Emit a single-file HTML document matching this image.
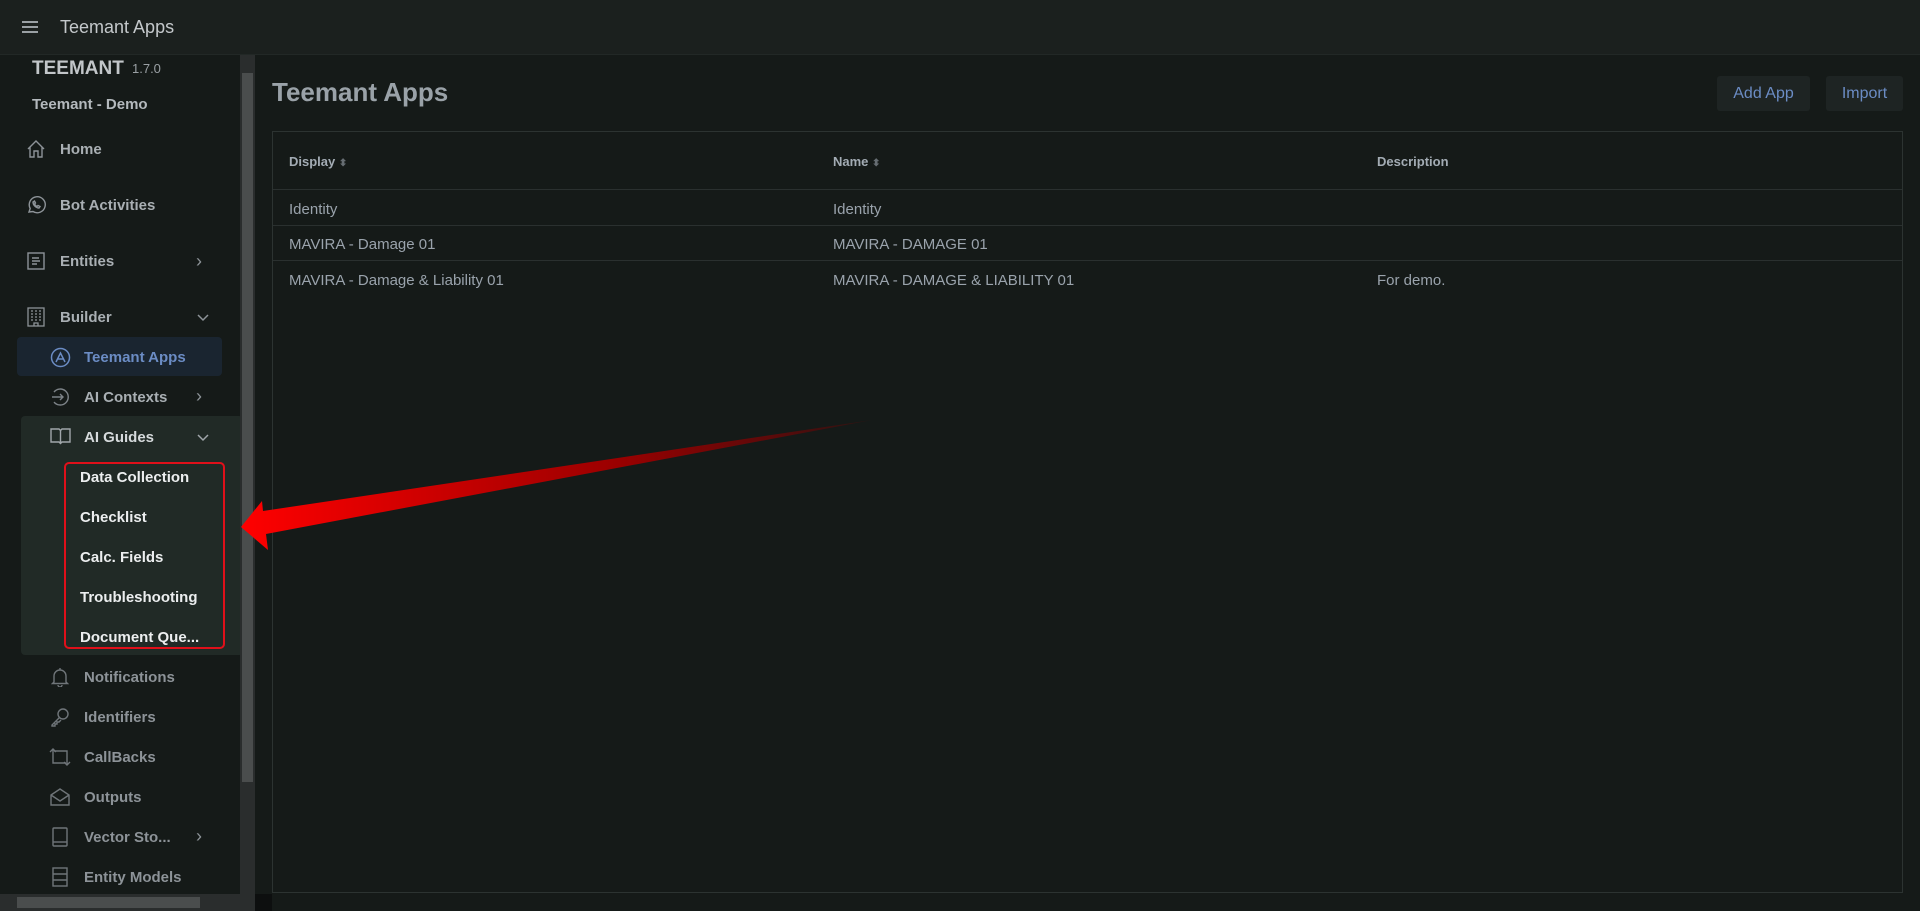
<!DOCTYPE html>
<html><head><meta charset="utf-8"><style>
*{box-sizing:border-box;margin:0;padding:0}
body{width:1920px;height:911px;overflow:hidden;background:#151a18;font-family:"Liberation Sans",sans-serif;position:relative;color:#b4b9bd}
.top{position:absolute;left:0;top:0;width:1920px;height:55px;background:#1b201e;border-bottom:1px solid #222826}
.top .t{position:absolute;left:60px;top:17px;font-size:18px;color:#c4c8cb}
.burger{position:absolute;left:22px;top:21px;width:16px}
.burger i{display:block;height:2px;background:#9aa0a4;margin-bottom:3px}
.side{position:absolute;left:0;top:55px;width:240px;height:839px;background:#151a18;overflow:hidden}
.vs{position:absolute;left:240px;top:55px;width:15px;height:839px;background:#2a2d2d}
.vs .th{position:absolute;left:2px;top:18px;width:11px;height:709px;background:#4a4d4d}
.hs{position:absolute;left:0;top:894px;width:255px;height:17px;background:#2a2d2d}
.hs .th{position:absolute;left:17px;top:3px;width:183px;height:11px;background:#4a4d4d}
.it{position:absolute;font-size:15px;font-weight:bold;color:#a9afb3;white-space:nowrap}
.ic{position:absolute;}
.main-t{position:absolute;left:272px;top:77px;font-size:26px;font-weight:bold;color:#9aa2a8}
.btn{position:absolute;top:76px;height:35px;background:#1e2423;border-radius:3px;color:#6b8cc4;font-size:16px;line-height:36px;text-align:center}
.tbl{position:absolute;left:272px;top:131px;width:1631px;height:762px;border:1px solid #2c3331}
.th2{position:absolute;top:22px;font-size:13px;font-weight:bold;color:#a3acb4}
.row{position:absolute;left:0;width:100%;border-top:1px solid #2a302f}
.cell{position:absolute;font-size:15px;color:#9aa3ac}
</style></head><body>
<div class="top"><div class="burger"><i></i><i></i><i></i></div><div class="t">Teemant Apps</div></div>
<div class="side">
<div style="position:absolute;left:32px;top:3px;font-size:19px;font-weight:bold;color:#c2c6c9">TEEMANT</div>
<div style="position:absolute;left:132px;top:6px;font-size:13px;color:#9aa0a4">1.7.0</div>
<div style="position:absolute;left:32px;top:41px;font-size:15px;font-weight:bold;color:#b4b9bd">Teemant - Demo</div>

<svg class="ic" style="left:26px;top:84px" width="20" height="20" viewBox="0 0 20 20" fill="none" stroke="#8d9398" stroke-width="1.4"><path d="M2 10L10 2l8 8M4 8v10h4v-6h4v6h4V8"/></svg>
<div class="it" style="left:60px;top:86px">Home</div>
<svg class="ic" style="left:26px;top:140px" width="20" height="20" viewBox="0 0 20 20" fill="none" stroke="#8d9398" stroke-width="1.4"><path d="M3 17l1.2-3.5A8 8 0 1 1 7 16.5z"/><path d="M7 7c0 3 3 6 6 6l1-1.5-2-1-1 1c-1-.5-2-1.5-2.5-2.5l1-1-1-2z"/></svg>
<div class="it" style="left:60px;top:142px">Bot Activities</div>
<svg class="ic" style="left:27px;top:197px" width="18" height="18" viewBox="0 0 18 18" fill="none" stroke="#8d9398" stroke-width="1.4"><rect x="1" y="1" width="16" height="16"/><path d="M5 6h7M5 9h8M5 12h5"/></svg>
<div class="it" style="left:60px;top:198px">Entities</div>
<div class="it" style="left:196px;top:196px;font-weight:normal;font-size:18px;color:#8d9398">›</div>
<svg class="ic" style="left:27px;top:252px" width="18" height="20" viewBox="0 0 18 20" fill="none" stroke="#8d9398" stroke-width="1.3"><rect x="1" y="1" width="16" height="18"/><path d="M4 4h2M8 4h2M12 4h2M4 7h2M8 7h2M12 7h2M4 10h2M8 10h2M12 10h2M4 13h2M8 13h2M12 13h2M7 19v-3h4v3"/></svg>
<div class="it" style="left:60px;top:254px">Builder</div>
<svg class="ic" style="left:197px;top:259px" width="12" height="8" viewBox="0 0 12 8" fill="none" stroke="#8d9398" stroke-width="1.5"><path d="M1 1l5 5 5-5"/></svg>

<div style="position:absolute;left:17px;top:282px;width:205px;height:39px;background:#1a2530;border-radius:4px"></div>
<svg class="ic" style="left:50px;top:292px" width="21" height="21" viewBox="0 0 21 21" fill="none" stroke="#6b8cc4" stroke-width="1.5"><circle cx="10.5" cy="10.5" r="9"/><path d="M6 15l4.5-9 4.5 9M7 12h7"/></svg>
<div class="it" style="left:84px;top:294px;color:#6b8cc4">Teemant Apps</div>
<svg class="ic" style="left:50px;top:332px" width="20" height="20" viewBox="0 0 20 20" fill="none" stroke="#7d8388" stroke-width="1.4"><path d="M4 5a8 8 0 1 1 0 10"/><path d="M2 10h11M10 7l3 3-3 3"/></svg>
<div class="it" style="left:84px;top:334px">AI Contexts</div>
<div class="it" style="left:196px;top:331px;font-weight:normal;font-size:18px;color:#8d9398">›</div>

<div style="position:absolute;left:21px;top:361px;width:222px;height:239px;background:#212a26;border-radius:4px"></div>
<svg class="ic" style="left:50px;top:372px" width="21" height="18" viewBox="0 0 21 18" fill="none" stroke="#a0a6aa" stroke-width="1.4"><path d="M1 2h8l1.5 1.5L12 2h8v13h-8l-1.5 1.5L9 15H1z M10.5 3.5v13"/></svg>
<div class="it" style="left:84px;top:374px;color:#d6dadc">AI Guides</div>
<svg class="ic" style="left:197px;top:379px" width="12" height="8" viewBox="0 0 12 8" fill="none" stroke="#a0a6aa" stroke-width="1.5"><path d="M1 1l5 5 5-5"/></svg>
<div style="position:absolute;left:64px;top:407px;width:161px;height:187px;border:2px solid #e0101a;border-radius:5px"></div>
<div class="it" style="left:80px;top:414px;color:#eceeef">Data Collection</div>
<div class="it" style="left:80px;top:454px;color:#eceeef">Checklist</div>
<div class="it" style="left:80px;top:494px;color:#eceeef">Calc. Fields</div>
<div class="it" style="left:80px;top:534px;color:#eceeef">Troubleshooting</div>
<div class="it" style="left:80px;top:574px;color:#eceeef">Document Que...</div>

<svg class="ic" style="left:51px;top:612px" width="18" height="20" viewBox="0 0 18 20" fill="none" stroke="#6f7579" stroke-width="1.4"><path d="M3 15V9a6 6 0 0 1 12 0v6l1.5 1.5h-15zM9 1v2M7 18a2 2 0 0 0 4 0"/></svg>
<div class="it" style="left:84px;top:614px;color:#8d9398">Notifications</div>
<svg class="ic" style="left:50px;top:652px" width="20" height="20" viewBox="0 0 20 20" fill="none" stroke="#6f7579" stroke-width="1.4"><circle cx="13" cy="7" r="5"/><path d="M9.5 10.5L2 18v1h3v-2h2v-2h2l2-2"/></svg>
<div class="it" style="left:84px;top:654px;color:#8d9398">Identifiers</div>
<svg class="ic" style="left:49px;top:693px" width="22" height="18" viewBox="0 0 22 18" fill="none" stroke="#6f7579" stroke-width="1.4"><path d="M4 1v14h13M1 4l3-3 3 3M18 17V3H5M21 14l-3 3-3-3"/></svg>
<div class="it" style="left:84px;top:694px;color:#8d9398">CallBacks</div>
<svg class="ic" style="left:50px;top:733px" width="20" height="18" viewBox="0 0 20 18" fill="none" stroke="#6f7579" stroke-width="1.4"><path d="M1 7l9-6 9 6v10H1zM1 7l9 6 9-6"/></svg>
<div class="it" style="left:84px;top:734px;color:#8d9398">Outputs</div>
<svg class="ic" style="left:52px;top:772px" width="16" height="20" viewBox="0 0 16 20" fill="none" stroke="#6f7579" stroke-width="1.4"><rect x="1" y="1" width="14" height="18" rx="1"/><path d="M1 15h14"/></svg>
<div class="it" style="left:84px;top:774px;color:#8d9398">Vector Sto...</div>
<div class="it" style="left:196px;top:771px;font-weight:normal;font-size:18px;color:#8d9398">›</div>
<svg class="ic" style="left:52px;top:812px" width="16" height="20" viewBox="0 0 16 20" fill="none" stroke="#6f7579" stroke-width="1.4"><rect x="1" y="1" width="14" height="18"/><path d="M1 7h14M1 13h14"/></svg>
<div class="it" style="left:84px;top:814px;color:#8d9398">Entity Models</div>
</div>
<div class="vs"><div class="th"></div></div>
<div class="hs"><div class="th"></div></div>
<div style="position:absolute;left:255px;top:894px;width:17px;height:17px;background:#0d0f0f"></div>

<div class="main-t">Teemant Apps</div>
<div class="btn" style="left:1717px;width:93px">Add App</div>
<div class="btn" style="left:1826px;width:77px">Import</div>
<div class="tbl">
<div class="th2" style="left:16px">Display <span style="color:#666d72;font-size:10px">⬍</span></div>
<div class="th2" style="left:560px">Name <span style="color:#666d72;font-size:10px">⬍</span></div>
<div class="th2" style="left:1104px">Description</div>
<div class="row" style="top:57px"></div>
<div class="row" style="top:93px"></div>
<div class="row" style="top:128px"></div>
<div class="cell" style="left:16px;top:69px">Identity</div>
<div class="cell" style="left:560px;top:69px">Identity</div>
<div class="cell" style="left:16px;top:104px">MAVIRA - Damage 01</div>
<div class="cell" style="left:560px;top:104px">MAVIRA - DAMAGE 01</div>
<div class="cell" style="left:16px;top:140px">MAVIRA - Damage &amp; Liability 01</div>
<div class="cell" style="left:560px;top:140px">MAVIRA - DAMAGE &amp; LIABILITY 01</div>
<div class="cell" style="left:1104px;top:140px">For demo.</div>
</div>

<svg style="position:absolute;left:0;top:0" width="1920" height="911">
<defs><linearGradient id="g" x1="240" y1="0" x2="870" y2="0" gradientUnits="userSpaceOnUse"><stop offset="0" stop-color="#ff0000"/><stop offset="0.6" stop-color="#9a0000"/><stop offset="0.85" stop-color="#5a0a0a"/><stop offset="1" stop-color="#2a1412"/></linearGradient></defs>
<polygon points="241,527 262,501 263,511 872,420 266,534 268,550" fill="url(#g)"/>
</svg>
</body></html>
